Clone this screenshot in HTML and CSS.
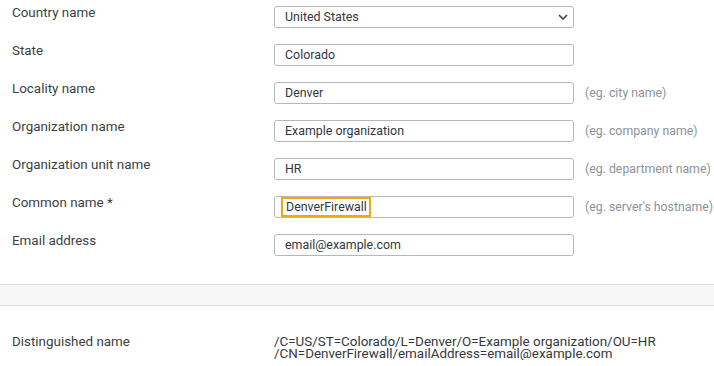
FILE: index.html
```html
<!DOCTYPE html>
<html>
<head>
<meta charset="utf-8">
<link rel="stylesheet" href="styles.css">
</head>
<body>
<div class="form">
  <div class="row">
    <div class="label">Country name</div>
    <div class="field select"><span>United States</span>
      <svg class="chev" width="10" height="6" viewBox="0 0 10 6"><path d="M1 1 L5 5 L9 1" fill="none" stroke="#3c4045" stroke-width="1.6"/></svg>
    </div>
  </div>
  <div class="row">
    <div class="label">State</div>
    <div class="field">Colorado</div>
  </div>
  <div class="row">
    <div class="label">Locality name</div>
    <div class="field">Denver</div>
    <div class="hint">(eg. city name)</div>
  </div>
  <div class="row">
    <div class="label">Organization name</div>
    <div class="field">Example organization</div>
    <div class="hint">(eg. company name)</div>
  </div>
  <div class="row">
    <div class="label">Organization unit name</div>
    <div class="field">HR</div>
    <div class="hint">(eg. department name)</div>
  </div>
  <div class="row">
    <div class="label">Common name *</div>
    <div class="field focus"><span class="hl">DenverFirewall</span></div>
    <div class="hint">(eg. server's hostname)</div>
  </div>
  <div class="row">
    <div class="label">Email address</div>
    <div class="field">email@example.com</div>
  </div>
</div>
<div class="band"></div>
<div class="dn">
  <div class="label">Distinguished name</div>
  <div class="dnval">/C=US/ST=Colorado/L=Denver/O=Example organization/OU=HR<br>/CN=DenverFirewall/emailAddress=email@example.com</div>
</div>
</body>
</html>
```
FILE: styles.css
```css
html, body {
  margin: 0;
  padding: 0;
  background: #ffffff;
  font-family: Roboto, "Liberation Sans", sans-serif;
  font-size: 13.4px;
  color: #3a3f45;
}
.form {
  padding-top: 6px;
}
.row {
  display: flex;
  align-items: flex-start;
  height: 38px;
}
.label {
  flex: 0 0 262px;
  padding-left: 12px;
  line-height: 16px;
  margin-top: -1px;
  color: #3a3f45;
  white-space: nowrap;
}
.field {
  flex: 0 0 auto;
  box-sizing: border-box;
  width: 300px;
  height: 22px;
  border: 1px solid #b3b8bd;
  border-radius: 3px;
  padding-left: 10px;
  display: flex;
  align-items: center;
  font-size: 12.4px;
  line-height: 16px;
  color: #33383e;
  position: relative;
}
.select .chev {
  position: absolute;
  right: 5px;
  top: 7px;
}
.focus {
  padding-left: 6px;
}
.hl {
  border: 2px solid #f2a80d;
  padding: 0 2px 0 3px;
  line-height: 16px;
}
.hint {
  margin-left: 11px;
  height: 22px;
  display: flex;
  align-items: center;
  font-size: 12.3px;
  color: #8d9297;
  white-space: nowrap;
}
.band {
  margin-top: 12px;
  height: 20px;
  background: #f7f7f7;
  border-top: 1px solid #dcdcdc;
  border-bottom: 1px solid #dcdcdc;
}
.dn {
  display: flex;
  align-items: flex-start;
  padding-top: 30px;
}
.dn .label {
  margin-top: 0;
  line-height: 12px;
}
.dnval {
  line-height: 12px;
  color: #33383e;
  white-space: nowrap;
}
```
